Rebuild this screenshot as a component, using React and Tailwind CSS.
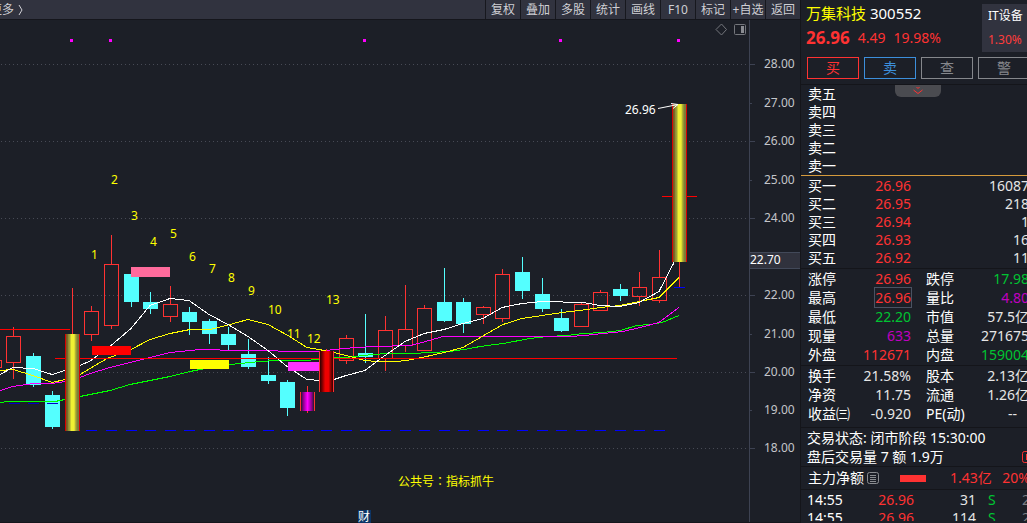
import React from 'react';
import clsx from 'clsx';

const RED = '#ff3232';
const CYAN = '#54ffff';

const TOOLS = ['复权', '叠加', '多股', '统计', '画线', 'F10', '标记', '+自选', '返回'];

// x: body left, top/bottom: body, high/low: wick
const CANDLES = [
  { x: -13, top: 360, bottom: 368, high: 360, low: 368, kind: 'up' },
  { x: 6, top: 336, bottom: 363, high: 327, low: 379, kind: 'up' },
  { x: 26, top: 356, bottom: 385, high: 353, low: 387, kind: 'down' },
  { x: 45, top: 395, bottom: 427, high: 391, low: 429, kind: 'down' },
  { x: 65, top: 334, bottom: 431, high: 288, low: 431, kind: 'gold' },
  { x: 84, top: 311, bottom: 335, high: 306, low: 341, kind: 'up' },
  { x: 104, top: 264, bottom: 326, high: 235, low: 329, kind: 'up' },
  { x: 124, top: 274, bottom: 302, high: 274, low: 307, kind: 'down' },
  { x: 143, top: 302, bottom: 309, high: 292, low: 314, kind: 'down' },
  { x: 163, top: 304, bottom: 317, high: 286, low: 322, kind: 'up' },
  { x: 182, top: 312, bottom: 322, high: 307, low: 335, kind: 'down' },
  { x: 202, top: 321, bottom: 334, high: 319, low: 344, kind: 'down' },
  { x: 221, top: 334, bottom: 345, high: 327, low: 350, kind: 'down' },
  { x: 241, top: 354, bottom: 367, high: 339, low: 369, kind: 'down' },
  { x: 261, top: 375, bottom: 381, high: 357, low: 384, kind: 'down' },
  { x: 280, top: 382, bottom: 408, high: 380, low: 416, kind: 'down' },
  { x: 300, top: 392, bottom: 411, high: 386, low: 413, kind: 'purple' },
  { x: 319, top: 351, bottom: 392, high: 349, low: 392, kind: 'crimson' },
  { x: 339, top: 338, bottom: 361, high: 335, low: 364, kind: 'up' },
  { x: 358, top: 353, bottom: 357, high: 314, low: 363, kind: 'down' },
  { x: 378, top: 330, bottom: 359, high: 316, low: 371, kind: 'up' },
  { x: 398, top: 329, bottom: 346, high: 285, low: 352, kind: 'up' },
  { x: 417, top: 308, bottom: 351, high: 305, low: 351, kind: 'up' },
  { x: 437, top: 302, bottom: 321, high: 268, low: 322, kind: 'down' },
  { x: 456, top: 302, bottom: 324, high: 298, low: 333, kind: 'down' },
  { x: 476, top: 307, bottom: 315, high: 306, low: 324, kind: 'up' },
  { x: 495, top: 274, bottom: 319, high: 269, low: 322, kind: 'up' },
  { x: 515, top: 272, bottom: 291, high: 257, low: 299, kind: 'down' },
  { x: 535, top: 294, bottom: 309, high: 278, low: 312, kind: 'down' },
  { x: 554, top: 318, bottom: 331, high: 309, low: 332, kind: 'down' },
  { x: 574, top: 304, bottom: 327, high: 303, low: 327, kind: 'up' },
  { x: 593, top: 292, bottom: 311, high: 290, low: 311, kind: 'up' },
  { x: 613, top: 289, bottom: 296, high: 284, low: 301, kind: 'down' },
  { x: 632, top: 287, bottom: 297, high: 272, low: 306, kind: 'up' },
  { x: 652, top: 277, bottom: 301, high: 250, low: 303, kind: 'up' },
  { x: 672, top: 104, bottom: 262, high: 104, low: 287, kind: 'gold' },
];

const AVERAGES = [
  {
    color: '#00ff00',
    points:
      '0,402 9,401 55,401 65,399 80,396 90,394 110,390 130,384 150,380 170,376 190,371 200,369 230,364 260,361 277,360 307,360 334,357 346,357 373,354 387,353 413,353 430,352 450,351 470,348 480,346 503,343 530,338 547,336 567,335 583,333 603,332 620,330 637,325 650,324 662,322 679,315',
  },
  {
    color: '#ff00ff',
    points:
      '0,390 13,386 33,383 52,383 65,381 80,377 90,373 110,367 130,362 150,357 170,352 190,350 200,349 218,349 222,350 276,350 280,351 318,351 334,349 355,347 375,346 410,345 422,342 443,336 500,336 570,336 585,335 603,333 623,331 640,327 659,322 679,307',
  },
  {
    color: '#ffff00',
    points:
      '0,370 13,369 33,375 52,382 65,379 80,374 90,368 107,358 131,349 150,339 170,333 190,329 210,329 230,324 248,319 268,324 288,335 307,347 319,349 334,352 346,355 365,360 377,361 395,361 407,360 422,357 444,352 463,347 482,336 503,324 522,318 542,315 562,312 580,310 600,307 620,305 639,301 659,297 679,277',
  },
  {
    color: '#ffffff',
    points:
      '0,374 13,367 33,368 52,374 65,370 80,365 91,360 111,345 131,328 150,305 170,298 189,300 209,314 228,324 248,336 268,350 287,366 307,379 320,380 334,379 346,375 365,370 385,355 405,341 424,333 444,329 463,323 483,318 502,307 522,303 542,301 583,302 600,305 620,306 639,302 659,291 674,262',
  },
];

const COUNTS = [
  [91, 259], [111, 184], [131, 220], [150, 246], [170, 238], [189, 261], [209, 273],
  [228, 282], [248, 295], [268, 314], [287, 338], [307, 343], [326, 304],
];

const GRID = [64, 141, 218, 295, 372, 448];

const AXIS = [
  ['28.00', 64], ['27.00', 103], ['26.00', 141], ['25.00', 180], ['24.00', 218],
  ['22.00', 295], ['21.00', 334], ['20.00', 372], ['19.00', 410], ['18.00', 448],
];

const BIDS = [
  ['买一', '26.96', '16087'],
  ['买二', '26.95', '218'],
  ['买三', '26.94', '1'],
  ['买四', '26.93', '16'],
  ['买五', '26.92', '11'],
];

const TONE = {
  red: 'text-[#ff3232]',
  green: 'text-[#00c432]',
  purple: 'text-[#c000c0]',
  white: 'text-[#e6e6e6]',
};

const QUOTES = [
  ['涨停', '26.96', 'red', '跌停', '17.98', 'green'],
  ['最高', '26.96', 'red', '量比', '4.80', 'purple'],
  ['最低', '22.20', 'green', '市值', '57.5亿', 'white'],
  ['现量', '633', 'purple', '总量', '271675', 'white'],
  ['外盘', '112671', 'red', '内盘', '159004', 'green'],
];

const FINANCE = [
  ['换手', '21.58%', 'white', '股本', '2.13亿', 'white'],
  ['净资', '11.75', 'white', '流通', '1.26亿', 'white'],
  ['收益㈢', '-0.920', 'white', 'PE(动)', '--', 'white'],
];

const TRADES = [
  ['14:55', '26.96', '31', 'S', '2'],
  ['14:55', '26.96', '114', 'S', '2'],
];

const Candle = ({ x, top, bottom, high, low, kind }) => {
  const h = bottom - top;
  const mid = x + 7;
  if (kind === 'up') {
    return (
      <g fill="none" stroke={RED}>
        <path d={`M${mid + 0.5} ${high}V${top}M${mid + 0.5} ${bottom}V${low}`} />
        <rect x={x + 0.5} y={top + 0.5} width="14" height={h - 1} />
      </g>
    );
  }
  if (kind === 'down') {
    return (
      <g fill={CYAN}>
        <rect x={mid} y={high} width="1" height={low - high} />
        <rect x={x} y={top} width="15" height={h} />
      </g>
    );
  }
  return (
    <g>
      <rect x={mid} y={high} width="1" height={low - high} fill={RED} />
      <rect x={x} y={top} width="15" height={h} fill={kind === 'gold' ? '#d80000' : RED} />
      <rect x={x + 1} y={top} width="13" height={h} fill={`url(#${kind})`} />
    </g>
  );
};

const isSolid = (c) => c.kind === 'gold' || c.kind === 'crimson';

const Chart = () => (
  <svg viewBox="0 20 800 503" className="block w-full" shapeRendering="crispEdges" role="img" aria-label="K线图">
    <defs>
      <linearGradient id="gold">
        <stop offset="0.1" stopColor="#7a5a20" />
        <stop offset="0.15" stopColor="#85853a" />
        <stop offset="0.3" stopColor="#a8a832" />
        <stop offset="0.4" stopColor="#f0f032" />
        <stop offset="0.62" stopColor="#f0f032" />
        <stop offset="0.75" stopColor="#a8a832" />
        <stop offset="0.9" stopColor="#7a7a38" />
      </linearGradient>
      <linearGradient id="purple">
        <stop offset="0" stopColor="#1c1f27" />
        <stop offset="0.15" stopColor="#800080" />
        <stop offset="0.5" stopColor="#ff00ff" />
        <stop offset="0.85" stopColor="#800080" />
        <stop offset="1" stopColor="#1c1f27" />
      </linearGradient>
      <linearGradient id="crimson">
        <stop offset="0" stopColor="#300000" />
        <stop offset="0.15" stopColor="#700000" />
        <stop offset="0.4" stopColor="#ee0000" />
        <stop offset="0.65" stopColor="#ee0000" />
        <stop offset="0.88" stopColor="#700000" />
        <stop offset="1" stopColor="#300000" />
      </linearGradient>
    </defs>

    {GRID.map((y) => (
      <path key={y} d={`M1 ${y + 0.5}H749`} stroke="#474a55" strokeDasharray="1 3" />
    ))}
    {[70, 109, 363, 559, 677].map((x) => (
      <rect key={x} x={x} y="39" width="3" height="3" fill="#ff00ff" />
    ))}

    {CANDLES.filter((c) => !isSolid(c)).map((c) => <Candle key={c.x} {...c} />)}

    <g stroke="#0000ff">
      <path d="M9 403.5h11M28 403.5h11M47 403.5h11" stroke="#0000c8" />
      {CANDLES.slice(5, 35).map((c) => (
        <path key={c.x} d={`M${c.x + 2} 430.5h11`} />
      ))}
      <path d="M674 287.5h11" />
    </g>
    {AVERAGES.map((line) => (
      <polyline key={line.color} points={line.points} transform="translate(0 .5)" fill="none" stroke={line.color} />
    ))}
    <path d="M0 329.5H70M55 358.5H677M662 196.5H697" stroke="#ff0000" />
    <rect x="131" y="267" width="39" height="10" fill="#ff6b9c" />
    <rect x="92" y="346" width="39" height="9" fill="#ff0000" />
    <rect x="190" y="360" width="39" height="9" fill="#ffff00" />
    <rect x="288" y="362" width="32" height="9" fill="#ff32ff" />

    {CANDLES.filter(isSolid).map((c) => <Candle key={c.x} {...c} />)}

    <g stroke="#ffffff" fill="none" shapeRendering="auto">
      <path d="M658 108.5L678 104.5M671 103.5L678 104.5L673 108.5" />
    </g>
    <text x="625" y="114" fontSize="12" fill="#ffffff">26.96</text>

    <g fontSize="12" fill="#ffff00">
      {COUNTS.map(([x, y], i) => (
        <text key={x} x={x} y={y}>{i + 1}</text>
      ))}
      <text x="398" y="486">
        公共号<tspan className="font-['Noto_Sans_CJK_TC',sans-serif]">：</tspan>指标抓牛
      </text>
    </g>
    <rect x="358" y="510" width="13" height="13" fill="#0c3566" />
    <text x="358" y="521" fontSize="12" fill="#ffffff">财</text>

    <g fill="none" stroke="#74767c">
      <path d="M721.5 24L726.5 29.5L721.5 35L716 29.5Z" shapeRendering="auto" />
      <rect x="734.5" y="24.5" width="11" height="10" rx="1" shapeRendering="auto" />
      <rect x="741" y="26" width="3" height="7" fill="#8a8c92" stroke="none" />
    </g>

    {/* price axis */}
    <path d="M749.5 20V523" stroke="#3d4252" />
    <g fontSize="12" fill="#c4c5ca">
      {AXIS.map(([label, y]) => (
        <React.Fragment key={label}>
          <path d={`M750 ${y + 0.5}h${GRID.includes(y) ? 5 : 2}`} stroke="#3d4252" />
          <text x="764" y={y + 4}>{label}</text>
        </React.Fragment>
      ))}
    </g>
    <rect x="750" y="252" width="50" height="17" fill="#30323d" />
    <path d="M750 252.5h50M750 268.5h50" stroke="#424959" />
    <text x="750" y="264" fontSize="12" fill="#ffffff">22.70</text>
    <path d="M0 522.5H358M371 522.5H800" stroke="#15161c" />
  </svg>
);

const Toolbar = () => (
  <div className="flex h-5 items-stretch justify-between border-b border-[#15161c] bg-[#31333f] text-xs leading-[19px] text-[#cfcfd4]">
    <button type="button" className="-ml-[10px] flex gap-1 whitespace-nowrap">
      <span>更多</span>
      <svg viewBox="0 0 6 12" className="mt-1 h-3 w-1.5" fill="none" stroke="currentColor" aria-hidden="true">
        <path d="M1 1L4 6L1 11" />
      </svg>
    </button>
    <div className="flex">
      {TOOLS.map((tool) => (
        <button
          key={tool}
          type="button"
          className="w-[35px] overflow-hidden whitespace-nowrap border-l border-[#17181e] text-center"
        >
          {tool}
        </button>
      ))}
    </div>
  </div>
);

const QuoteTable = ({ rows, className }) => (
  <table className={clsx('ml-[7px] w-[221px] table-fixed', className)}>
    <colgroup>
      <col className="w-12" />
      <col className="w-[55px]" />
      <col className="w-[60px]" />
      <col className="w-[58px]" />
    </colgroup>
    <tbody>
      {rows.map(([label, value, tone, label2, value2, tone2]) => (
        <tr key={label} className="h-[19px] whitespace-nowrap">
          <th scope="row" className="text-left font-normal">{label}</th>
          <td className={clsx('text-right', TONE[tone])}>
            <span className={clsx(label === '最高' && 'outline outline-1 outline-offset-0 outline-[#4a5262]')}>
              {value}
            </span>
          </td>
          <th scope="row" className="pl-[15px] text-left font-normal">{label2}</th>
          <td className={clsx('text-right', TONE[tone2], value2 === '--' && 'pr-3')}>{value2}</td>
        </tr>
      ))}
    </tbody>
  </table>
);

const ACTIONS = [
  ['买', 'border-[#ff3232] text-[#ff3232]'],
  ['卖', 'border-[#3c8fdc] text-[#3c8fdc]'],
  ['查', 'border-[#85878c] text-[#85878c]'],
  ['警', 'border-[#85878c] text-[#85878c]'],
];

const SidePanel = () => (
  <aside className="w-[227px] shrink-0 overflow-hidden border-l border-[#14151a] text-sm leading-[18px] text-white">
    <div className="flex h-[57px] w-[229px] justify-between whitespace-nowrap">
      <div className="pl-[5px] pt-[3px]">
        <h1 className="text-[15px] leading-5">
          <span className="text-[#ffff00]">万集科技</span> 300552
        </h1>
        <div className="mt-[5px] flex items-center gap-2 leading-5 text-[#ff3232]">
          <strong className="text-[17px]">26.96</strong>
          <span>4.49</span>
          <span>19.98%</span>
        </div>
      </div>
      <div className="mt-1 h-12 w-12 bg-[#31333f] pl-1.5 text-xs">
        <div className="leading-6">IT设备</div>
        <div className="leading-6 text-[#ff3c3c]">1.30%</div>
      </div>
    </div>
    <div className="flex w-[229px] gap-[5px] pl-1.5">
      {ACTIONS.map(([label, style]) => (
        <button key={label} type="button" className={clsx('h-[22px] w-[52px] shrink-0 border leading-5', style)}>
          {label}
        </button>
      ))}
    </div>

    <div className="relative mt-[5px] border-t border-[#14151a]">
      <button
        type="button"
        aria-label="展开"
        className="absolute left-[94px] top-0 flex h-3 w-[46px] justify-center rounded-b-md bg-[#4a4b50]"
      >
        <svg viewBox="0 0 12 10" className="mt-px h-2.5 w-3" fill="none" stroke={RED} aria-hidden="true">
          <path d="M4.5 1L6 2.5L7.5 1M1.5 4L6 7.5L10.5 4" />
        </svg>
      </button>
      <ul className="pl-[7px]">
        {['卖五', '卖四', '卖三', '卖二', '卖一'].map((level) => (
          <li key={level}>{level}</li>
        ))}
      </ul>
    </div>
    <div className="border-t border-[#d59a3c]" />
    <table className="ml-[7px] mt-px w-[221px] table-fixed">
      <colgroup>
        <col className="w-12" />
        <col className="w-[55px]" />
        <col className="w-[118px]" />
      </colgroup>
      <tbody>
        {BIDS.map(([level, price, volume]) => (
          <tr key={level}>
            <th scope="row" className="text-left font-normal">{level}</th>
            <td className={clsx('text-right', TONE.red)}>{price}</td>
            <td className={clsx('text-right', TONE.white)}>{volume}</td>
          </tr>
        ))}
      </tbody>
    </table>

    <div className="mt-px border-t border-[#14151a]">
      <QuoteTable rows={QUOTES} className="mb-px" />
    </div>
    <div className="border-t border-[#14151a]">
      <QuoteTable rows={FINANCE} className="mb-1" />
    </div>
    <div className="w-[229px] whitespace-nowrap border-t border-[#14151a] pl-1.5 leading-[19px]">
      <p>交易状态: 闭市阶段 15:30:00</p>
      <div className="flex items-center justify-between">
        <p>盘后交易量 7 额 1.9万</p>
        <svg viewBox="0 0 8 12" className="h-3 w-2" fill="none" stroke={RED} aria-hidden="true">
          <path d="M9 .5H2.5Q.5 .5 .5 2.5V9.5Q.5 11.5 2.5 11.5H9M4.5 3V9" />
        </svg>
      </div>
    </div>
    <div className="flex h-[23px] w-[229px] items-center whitespace-nowrap border-t border-[#14151a] pl-[7px]">
      <span>主力净额</span>
      <svg viewBox="0 0 12 12" className="ml-[3px] h-3 w-3" fill="none" stroke="#8a8c90" aria-hidden="true">
        <rect x=".5" y=".5" width="11" height="11" rx="2" />
        <path d="M3 3.5H9M3 5.5H9M3 7.5H9M3 9.5H9" />
      </svg>
      <span className="ml-[21px] h-[7px] w-[26px] bg-[#ff3232]" />
      <span className="ml-6 text-[#ff3232]">1.43亿</span>
      <span className="ml-auto text-[#ff3232]">20%</span>
    </div>
    <div className="h-8 overflow-hidden border-t border-[#14151a] pt-px">
      <table className="ml-1.5 w-[223px] table-fixed">
        <colgroup>
          <col className="w-12" />
          <col className="w-[59px]" />
          <col className="w-[62px]" />
          <col className="w-[30px]" />
          <col className="w-6" />
        </colgroup>
        <tbody>
          {TRADES.map(([time, price, volume, side, count]) => (
            <tr key={volume}>
              <td>{time}</td>
              <td className={clsx('text-right', TONE.red)}>{price}</td>
              <td className={clsx('text-right', TONE.white)}>{volume}</td>
              <td className={clsx('pl-3', TONE.green)}>{side}</td>
              <td className="text-right text-[#7d7f85]">{count}</td>
            </tr>
          ))}
        </tbody>
      </table>
    </div>
  </aside>
);

const App = () => (
  <div className="flex items-stretch overflow-hidden bg-[#1c1f27] font-['Noto_Sans','Noto_Sans_CJK_SC',sans-serif]">
    <main className="min-w-0 flex-1">
      <Toolbar />
      <Chart />
    </main>
    <SidePanel />
  </div>
);

export default App;
